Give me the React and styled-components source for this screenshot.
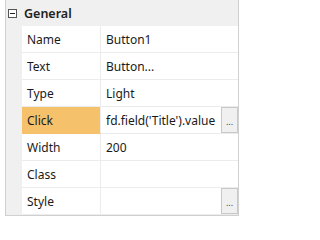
import React from 'react';
import styled, { createGlobalStyle } from 'styled-components';

const GlobalStyle = createGlobalStyle`
  body {
    margin: 0;
    background: #ffffff;
    font-family: "Noto Sans", "Open Sans", sans-serif;
    font-size: 12px;
    color: #1a1a1a;
  }
`;

const properties = [
  { name: 'Name', value: 'Button1' },
  { name: 'Text', value: 'Button...' },
  { name: 'Type', value: 'Light' },
  { name: 'Click', value: "fd.field('Title').value", selected: true, editor: true },
  { name: 'Width', value: '200' },
  { name: 'Class', value: '' },
  { name: 'Style', value: '', editor: true },
];

const App = () => (
  <>
    <GlobalStyle />
    <Page>
      <Grid>
        <Header>
          <Toggle>
            <svg width="9" height="9" viewBox="0 0 9 9">
              <rect x="0.5" y="0.5" width="8" height="8" fill="#fff" stroke="#555" />
              <line x1="2" y1="4.5" x2="7" y2="4.5" stroke="#222" />
            </svg>
          </Toggle>
          <HeaderTitle>General</HeaderTitle>
        </Header>
        {properties.map((prop) => (
          <Row key={prop.name}>
            <Gutter />
            <Label $selected={prop.selected}>{prop.name}</Label>
            <Value>
              <ValueText>{prop.value}</ValueText>
              {prop.editor && <EditButton>...</EditButton>}
            </Value>
          </Row>
        ))}
      </Grid>
    </Page>
  </>
);

export default App;

const Page = styled.div`
  width: 243px;
  height: 228px;
  padding-left: 5px;
  box-sizing: border-box;
`;

const Grid = styled.div`
  width: 234px;
  border-left: 1px solid #d0d0d0;
  border-right: 1px solid #d0d0d0;
  border-bottom: 1px solid #d0d0d0;
  box-sizing: border-box;
  display: flex;
  flex-direction: column;
`;

const Header = styled.div`
  height: 26px;
  background: #f0f0f0;
  display: flex;
  align-items: center;
  gap: 7px;
  padding-left: 2px;
`;

const Toggle = styled.div`
  display: flex;
  align-items: center;
  margin-top: 1px;
`;

const HeaderTitle = styled.span`
  font-weight: 600;
  font-size: 12.5px;
  color: #222;
`;

const Row = styled.div`
  display: grid;
  grid-template-columns: 16px 79px 1fr;
  height: 27px;
`;

const Gutter = styled.div`
  background: #f0f0f0;
`;

const Label = styled.div`
  display: flex;
  align-items: center;
  padding-left: 5px;
  background: ${(p) => (p.$selected ? '#f5c26b' : '#ffffff')};
  border-right: 1px solid #ececec;
  border-bottom: 1px solid ${(p) => (p.$selected ? '#f5c26b' : '#ececec')};
`;

const Value = styled.div`
  display: flex;
  align-items: stretch;
  border-bottom: 1px solid #ececec;
  min-width: 0;
`;

const ValueText = styled.span`
  flex: 1;
  display: flex;
  align-items: center;
  padding-left: 5px;
  white-space: nowrap;
  overflow: hidden;
`;

const EditButton = styled.div`
  width: 15px;
  background: #f0f0f0;
  border: 1px solid #c8c8c8;
  display: flex;
  align-items: center;
  justify-content: center;
  font-size: 9px;
  color: #444;
  padding-top: 2px;
`;
